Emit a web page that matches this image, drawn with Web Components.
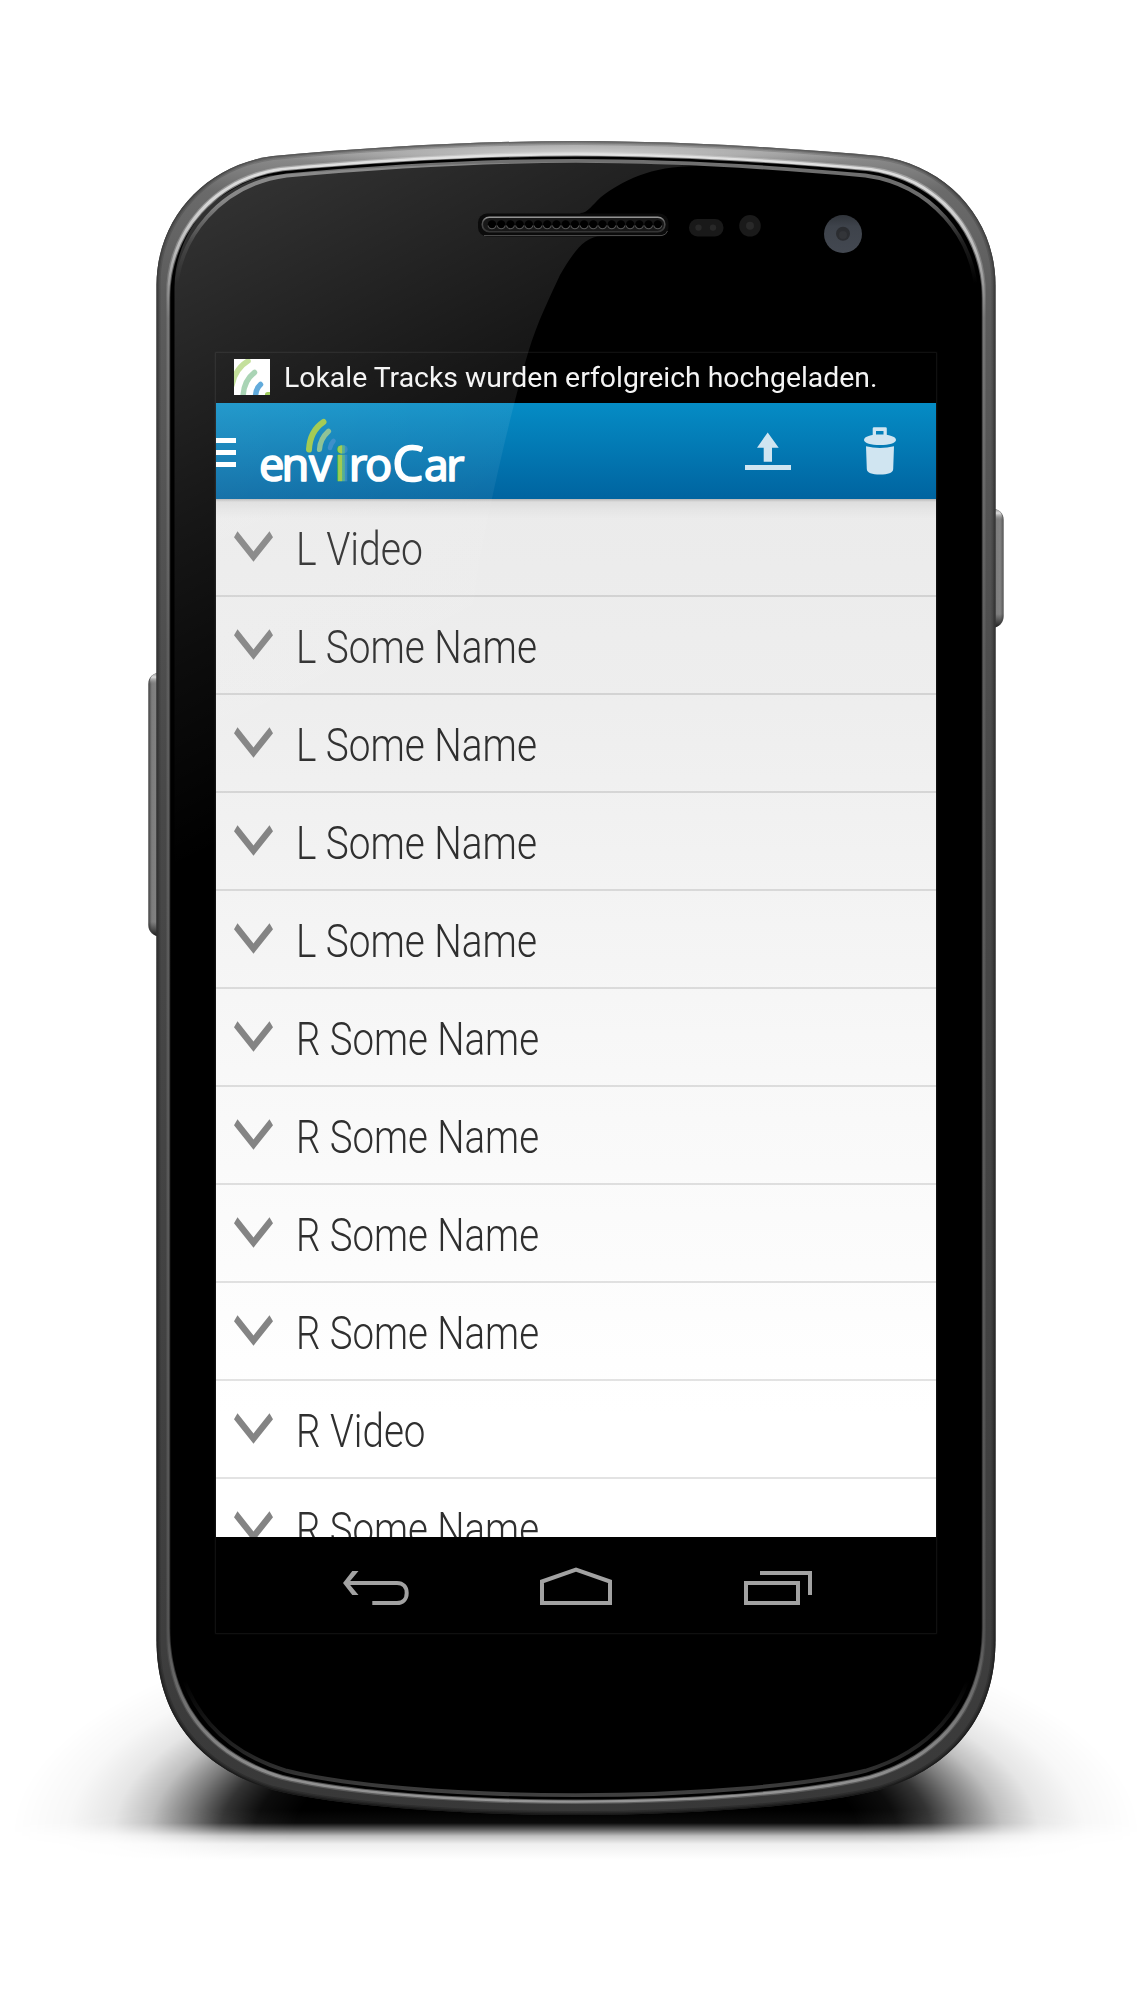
<!DOCTYPE html>
<html lang="de">
<head>
<meta charset="utf-8">
<title>enviroCar</title>
<style>
html,body{margin:0;padding:0;background:#fff;font-family:Roboto,"Liberation Sans",sans-serif}
</style>
</head>
<body>
<phone-frame>
  <status-bar><fit-text width="593.5">Lokale Tracks wurden erfolgreich hochgeladen.</fit-text></status-bar>
  <action-bar></action-bar>
  <track-list>
    <track-row><fit-text width="127">L Video</fit-text></track-row>
    <track-row><fit-text width="241">L Some Name</fit-text></track-row>
    <track-row><fit-text width="241">L Some Name</fit-text></track-row>
    <track-row><fit-text width="241">L Some Name</fit-text></track-row>
    <track-row><fit-text width="241">L Some Name</fit-text></track-row>
    <track-row><fit-text width="243">R Some Name</fit-text></track-row>
    <track-row><fit-text width="243">R Some Name</fit-text></track-row>
    <track-row><fit-text width="243">R Some Name</fit-text></track-row>
    <track-row><fit-text width="243">R Some Name</fit-text></track-row>
    <track-row><fit-text width="129.5">R Video</fit-text></track-row>
    <track-row><fit-text width="243">R Some Name</fit-text></track-row>
  </track-list>
  <nav-bar></nav-bar>
</phone-frame>
<script>
function define(name, html, ready) {
  customElements.define(name, class extends HTMLElement {
    constructor() {
      super();
      this.attachShadow({mode: 'open'}).innerHTML = html;
    }
    connectedCallback() { if (ready) ready.call(this); }
  });
}

let holes = '';
for (let i = 0; i < 19; i++) {
  const x = 492 + i * 9.21;
  holes += `<circle cx="${x}" cy="224.5" r="4.2" fill="#000"/><path d="M${x-4} 225.5a4.1 4.1 0 0 0 8 0" fill="none" stroke="#585858" stroke-width="1.1"/>`;
}

define('phone-frame', `
<style>
:host{display:flex;flex-direction:column;position:relative;box-sizing:border-box;width:1148px;height:1994px;padding:353px 212px 361px 216px;overflow:hidden}
.body,.gloss{position:absolute;left:0;top:0;width:1148px;height:1994px;pointer-events:none}
.screen{position:relative;display:flex;flex-direction:column;width:720px;height:1280px;background:#000;box-shadow:0 0 0 1px rgba(255,255,255,.035),0 0 2px 1px rgba(255,255,255,.05);overflow:hidden}
</style>
<svg class="body" viewBox="0 0 1148 1994">
<defs>
<path id="o" d="M156.5 285C156.5 218 206 165 273 156C380 146.500 480 141 576 141S772 146.500 879 156C946 165 995.500 218 995.500 285V1640C995.500 1730 937 1773 879 1790C820 1805 700 1815 576 1815S332 1805 273 1790C215 1773 156.500 1730 156.500 1640Z"/>
<clipPath id="oc"><use href="#o"/></clipPath>
<linearGradient id="metal" gradientUnits="userSpaceOnUse" x1="0" y1="141" x2="0" y2="1815">
<stop offset="0" stop-color="#a8a8a8"/><stop offset=".01" stop-color="#8a8a8a"/><stop offset=".03" stop-color="#6a6a6a"/><stop offset=".09" stop-color="#5c5c5c"/><stop offset=".4" stop-color="#484848"/><stop offset=".9" stop-color="#3e3e3e"/><stop offset="1" stop-color="#383838"/></linearGradient>
<linearGradient id="edge" gradientUnits="userSpaceOnUse" x1="0" y1="141" x2="0" y2="1815">
<stop offset="0" stop-color="#666"/><stop offset=".02" stop-color="#444"/><stop offset=".1" stop-color="#3a3a3a"/><stop offset=".9" stop-color="#242424"/><stop offset="1" stop-color="#181818"/></linearGradient>
<linearGradient id="shine" gradientUnits="userSpaceOnUse" x1="0" y1="141" x2="0" y2="1815">
<stop offset="0" stop-color="#e2e2e2"/><stop offset=".03" stop-color="#d4d4d4"/><stop offset=".06" stop-color="#b8b8b8"/><stop offset=".1" stop-color="#787878"/><stop offset=".3" stop-color="#5e5e5e"/><stop offset=".9" stop-color="#565656"/><stop offset=".96" stop-color="#808080"/><stop offset="1" stop-color="#969696"/></linearGradient>
<linearGradient id="rim" gradientUnits="userSpaceOnUse" x1="0" y1="141" x2="0" y2="1815">
<stop offset="0" stop-color="#707070"/><stop offset=".025" stop-color="#6a6a6a"/><stop offset=".05" stop-color="#666" stop-opacity=".3"/><stop offset=".075" stop-color="#666" stop-opacity="0"/><stop offset=".93" stop-color="#444" stop-opacity="0"/><stop offset=".975" stop-color="#404040" stop-opacity=".6"/><stop offset="1" stop-color="#404040"/></linearGradient>
<radialGradient id="topg" gradientUnits="userSpaceOnUse" cx="0" cy="0" r="1" gradientTransform="translate(576 153) scale(330 14)">
<stop offset="0" stop-color="#d0d0d0"/><stop offset=".5" stop-color="#bbb" stop-opacity=".7"/><stop offset="1" stop-color="#aaa" stop-opacity="0"/></radialGradient>
<radialGradient id="sh" gradientUnits="userSpaceOnUse" cx="0" cy="0" r="1" gradientTransform="translate(576 1836) scale(565 230)">
<stop offset=".5"/><stop offset=".57" stop-opacity=".95"/><stop offset=".63" stop-opacity=".8"/><stop offset=".69" stop-opacity=".52"/><stop offset=".755" stop-opacity=".25"/><stop offset=".82" stop-opacity=".1"/><stop offset=".9" stop-opacity=".03"/><stop offset="1" stop-opacity="0"/></radialGradient>
<linearGradient id="fade" gradientUnits="userSpaceOnUse" x1="0" y1="1810" x2="0" y2="1860">
<stop offset="0" stop-color="#fff"/><stop offset=".26" stop-color="#f4f4f4"/><stop offset=".4" stop-color="#999"/><stop offset=".52" stop-color="#404040"/><stop offset=".68" stop-color="#101010"/><stop offset="1" stop-color="#000"/></linearGradient>
<mask id="m" maskUnits="userSpaceOnUse" x="0" y="1500" width="1148" height="400" style="mask-type:luminance"><rect y="1500" width="1148" height="400" fill="url(#fade)"/></mask>
<linearGradient id="key" x1="0" x2="1" y1="0" y2="0"><stop offset="0" stop-color="#404040"/><stop offset=".3" stop-color="#7c7c7c"/><stop offset=".7" stop-color="#828282"/><stop offset="1" stop-color="#555"/></linearGradient>
<linearGradient id="cap" x1="0" x2="0" y1="0" y2="1"><stop offset="0" stop-color="#888"/><stop offset=".4" stop-color="#ddd"/><stop offset="1" stop-color="#888" stop-opacity="0"/></linearGradient>
<linearGradient id="foot" x1="0" x2="0" y1="0" y2="1"><stop offset="0" stop-color="#222" stop-opacity="0"/><stop offset="1" stop-color="#181818"/></linearGradient>
</defs>
<rect y="1500" width="1148" height="400" fill="url(#sh)" mask="url(#m)"/>
<path d="M160 672.500C153 673 148.300 677 148.300 684V925C148.300 932 153 936 160 936.500Z" fill="url(#key)"/>
<path d="M160 672.500C153 673 149.500 677 149.500 684H160Z" fill="url(#cap)"/><path d="M160 922H148.500C148.500 932 153 936 160 936.500Z" fill="url(#foot)"/>
<path d="M992 508.500C999 509 1003.700 513 1003.700 520V616C1003.700 623 999 627.500 992 628Z" fill="url(#key)"/>
<path d="M992 508.500C999 509 1002.500 513 1002.500 520H992Z" fill="url(#cap)"/><path d="M992 614H1003.500C1003.500 623 999 627.500 992 628Z" fill="url(#foot)"/>
<g clip-path="url(#oc)">
<use href="#o" fill="url(#metal)"/>
<rect x="240" y="139" width="672" height="30" fill="url(#topg)"/>
<use href="#o" fill="none" stroke="url(#edge)" stroke-width="8" opacity=".35"/>
<use href="#o" fill="none" stroke="url(#edge)" stroke-width="5" opacity=".5"/>
<use href="#o" fill="none" stroke="url(#edge)" stroke-width="2.500"/>
</g>
<g transform="translate(576 978) scale(.9745 .9855) translate(-576 -978)"><use href="#o" fill="url(#shine)" stroke="url(#shine)" stroke-width="2.500" stroke-opacity=".4"/></g>
<g transform="translate(576 978) scale(.9672 .9815) translate(-576 -978)"><use href="#o" fill="#000" stroke="#000" stroke-opacity=".45" stroke-width="2"/></g>
<g transform="translate(576 978) scale(.955 .9763) translate(-576 -978)"><use href="#o" fill="#000" stroke="url(#rim)" stroke-width="4"/></g>
</svg>
<div class="screen"><slot></slot></div>
<svg class="gloss" viewBox="0 0 1148 1994">
<defs>
<linearGradient id="g" gradientUnits="userSpaceOnUse" x1="230" y1="150" x2="509" y2="702">
<stop offset="0" stop-color="#fff" stop-opacity=".21"/><stop offset=".5" stop-color="#fff" stop-opacity=".09"/><stop offset=".7" stop-color="#fff" stop-opacity=".05"/><stop offset="1" stop-color="#fff" stop-opacity="0"/></linearGradient>
<linearGradient id="gl" gradientUnits="userSpaceOnUse" x1="0" y1="217" x2="0" y2="232"><stop offset="0" stop-color="#9a9a9a"/><stop offset=".3" stop-color="#555"/><stop offset="1" stop-color="#333"/></linearGradient>
<linearGradient id="lens" x1="0" x2="0" y1="0" y2="1"><stop offset="0" stop-color="#30343a"/><stop offset=".3" stop-color="#3e434b"/><stop offset="1" stop-color="#434851"/></linearGradient>
</defs>
<path d="M174.500 900V287C175 250 192 222 212 203C235 186 256 176 276 175C400 165 480 162.500 576 162.500C620 162.500 660 164 697 166C650 166 622 181 601 197C592 205 588 213 580 213L602 236C584 236 573 253 560 275C550 297 538 320 528 353C514 400 490 500 478 570C466 650 458 750 454 900Z" fill="url(#g)"/>
<rect x="478" y="213.500" width="190.500" height="23" rx="9" fill="#0b0b0b"/>
<path d="M484 235.500H662Q666 235 667.500 231" fill="none" stroke="#4a4a4a" stroke-width="1"/>
<rect x="482.300" y="217.200" width="182.500" height="14.500" rx="7" fill="#181818" stroke="url(#gl)" stroke-width="1.600"/>
${holes}
<rect x="689" y="219" width="34.500" height="17.500" rx="8.500" fill="#191919"/><circle cx="698.500" cy="227.600" r="3.200" fill="#282828"/><circle cx="713" cy="227.600" r="3.200" fill="#282828"/>
<circle cx="750" cy="225.800" r="10.800" fill="#1a1a1a"/><circle cx="750" cy="225.800" r="4" fill="#292929"/>
<circle cx="843" cy="234" r="19" fill="url(#lens)"/><circle cx="843" cy="233.800" r="7" fill="#2b2d31"/><circle cx="843" cy="235" r="4" fill="#333539"/>
</svg>`);

define('status-bar', `
<style>
:host{display:flex;align-items:center;gap:13.500px;height:50px;padding-left:18px;flex:none;background:#000;color:#f4f4f4;font-size:28px;line-height:50px}
svg{display:block;flex:none;position:relative;top:-1px}
</style>
<svg width="36" height="36" viewBox="0 0 36 36"><rect width="36" height="36" fill="#fff"/>
<g fill="none" stroke-linecap="round" stroke-width="5.500"><path d="M14 2Q1 10-2 26" stroke="#bbdb8c"/><path d="M20.500 13.500Q9.500 22 9 38" stroke="#9dceaa"/><path d="M26.500 25.500Q21.500 30 21.500 38" stroke="#4c9fd6"/></g><path d="M31 36V34.500Q31.500 33 33.500 33H36V36Z" fill="#93c647"/></svg>
<slot></slot>`);

define('action-bar', `
<style>
:host{display:flex;align-items:center;height:96px;flex:none;background:linear-gradient(#058cc5,#0064a0)}
svg{display:block;flex:none}.sp{flex:1}
text{font-family:"Noto Sans",sans-serif}
</style>
<svg width="20" height="96" viewBox="0 0 20 96" fill="#fff"><path d="M0 35h20v5H0zM0 47h20v5H0zM0 59h20v5H0z"/></svg>
<svg width="240" height="96" viewBox="236 403 240 96">
<defs><linearGradient id="i" gradientUnits="userSpaceOnUse" x1="337" y1="0" x2="347.500" y2="0"><stop offset=".45" stop-color="#9ac642"/><stop offset=".47" stop-color="#4fae83"/><stop offset=".73" stop-color="#43a291"/><stop offset=".77" stop-color="#2585c2"/></linearGradient></defs>
<g fill="none" stroke-linecap="round"><path d="M309 449.500Q310 431 323.500 422" stroke="#9ac642" stroke-width="6"/><path d="M319.500 449.500Q320 439 328.500 431.300" stroke="#83bd8b" stroke-width="5.200"/><path d="M330 448Q330.500 444 333.500 441" stroke="#2b85c5" stroke-width="4.600"/></g>
<text y="481" font-size="45" font-weight="400" fill="#fff" stroke="#fff" stroke-width="1.600" stroke-linejoin="round"><tspan x="259 281.500 309">env</tspan><tspan x="334.800" font-size="46" font-weight="900" fill="url(#i)" stroke="url(#i)" stroke-width=".6">i</tspan><tspan x="348.800 365">ro</tspan><tspan x="392.300" font-size="50">C</tspan><tspan x="424 446.300" font-size="44">ar</tspan></text>
</svg>
<div class="sp"></div>
<svg width="200" height="96" viewBox="736 403 200 96" fill="#d0e5f1">
<path d="M767.700 432.500L778.700 447.700H772V461.700H763.700V447.700H757ZM745 465H791V470H745Z"/>
<path fill-rule="evenodd" d="M872.700 436V428.500Q872.700 427.300 874 427.300H885.500Q886.800 427.300 886.800 428.500V436H883.500V431H876V436Z"/>
<path d="M864 440C864 436.500 871 434.600 880 434.600S896 436.500 896 440C896 443 889 445 880 445S864 443 864 440Z"/>
<path d="M866 446.300Q880 449.500 894 446.300L893.200 469C893 473 888 474.500 880 474.500S867 473 866.800 469Z"/></svg>`);

define('track-list', `
<style>
:host{display:flex;flex-direction:column;height:1038px;flex:none;overflow:hidden;background:linear-gradient(rgba(0,0,0,.22),rgba(0,0,0,.06) 3px,rgba(0,0,0,.03) 9px,rgba(0,0,0,0) 20px),linear-gradient(#ebebeb,#eee 20%,#f8f8f8 55%,#fff 88%)}
</style><slot></slot>`);

define('track-row', `
<style>
:host{display:flex;flex:none;box-sizing:border-box;height:98px;border-bottom:2px solid rgba(0,0,0,.11);padding-left:18px;gap:22.500px;color:#2f2f2f;font-size:46px;font-weight:330;line-height:101px}
svg{display:block;flex:none;margin-top:32px}
</style>
<svg width="39" height="31" viewBox="0 0 39 31"><path d="M3.500.3L0 6.300 19.500 30.700 39 6.300 35.500.3 19.500 20.500Z" fill="#848484"/></svg>
<slot></slot>`);

define('nav-bar', `
<style>
:host{display:flex;justify-content:center;gap:128px;height:96px;flex:none;background:#000}
svg{display:block;fill:none;stroke:#a2a2a2;stroke-width:4}
</style>
<svg width="72" height="96" viewBox="0 0 72 96"><path d="M5 46H57C63 46 66.700 50 66.700 56S63 66 57 66H32.300"/><path d="M12.300 34H18.500L8.500 46 18.500 58H12.300L3 46Z" fill="#a2a2a2" stroke="none"/></svg>
<svg width="72" height="96" viewBox="0 0 72 96"><path d="M2 66V44.500L36 32.500 70 44.500V66Z"/></svg>
<svg width="72" height="96" viewBox="0 0 72 96"><path d="M6 46H58V66H6ZM20 36H70V58"/></svg>`);

/* Registered last: it measures its text, so the hosts that set the font size must be styled already. */
define('fit-text', `
<style>:host{display:block;white-space:nowrap}span{display:inline-block;transform-origin:0 50%}</style><span><slot></slot></span>`,
function () {
  const s = this.shadowRoot.querySelector('span');
  const want = parseFloat(this.getAttribute('width'));
  const have = s.getBoundingClientRect().width;
  this.style.width = want + 'px';
  if (have) s.style.transform = `scaleX(${want / have})`;
});
</script>
</body>
</html>
